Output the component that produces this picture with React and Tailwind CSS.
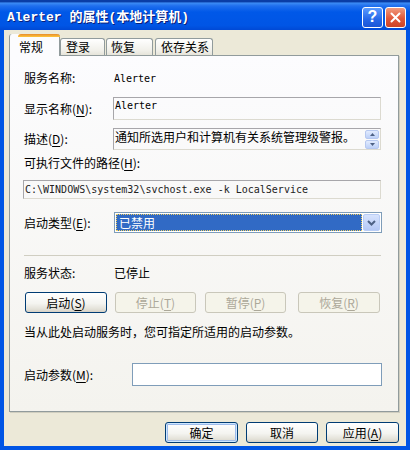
import React from "react";

function XpButton({ children, disabled, isDefault, className = "" }) {
  return (
    <div
      className={`flex items-center justify-center h-[21px] rounded-[3px] border text-[12px] leading-none ${
        disabled
          ? "border-[#C9C7BA] text-[#ACA899] bg-[#F5F4EA]"
          : "border-[#003C74] text-black bg-[linear-gradient(180deg,#FFFFFF_0%,#F4F4F0_55%,#E3E1D8_85%,#D6D0C5_100%)]"
      } ${isDefault ? "shadow-[inset_0_0_0_1px_#CEE7FF,inset_0_0_0_2px_#9DBBEB]" : ""} ${className}`}
    >
      {children}
    </div>
  );
}

function Mn({ children }) {
  return <span className="underline underline-offset-2">{children}</span>;
}

function Tab({ children, selected, className = "" }) {
  if (selected) {
    return (
      <div className={`relative z-10 -mb-px h-[22px] flex flex-col rounded-t-[3px] border-x border-[#919B9C] bg-[#FCFCFE] ${className}`}>
        <div className="h-[3px] -mx-px rounded-t-[3px] bg-[linear-gradient(180deg,#E68B2C,#FFC73C)]" />
        <div className="flex-1 flex items-center leading-none">{children}</div>
      </div>
    );
  }
  return (
    <div className={`h-[17px] flex items-center rounded-t-[3px] border border-b-0 border-[#919B9C] bg-[linear-gradient(180deg,#FFFFFF,#F1F0EA_70%,#E6E4DA)] leading-none ${className}`}>
      {children}
    </div>
  );
}

function Sunken({ className = "", children }) {
  return (
    <div className={`border border-t-[#A7A6AA] border-l-[#A7A6AA] border-r-[#DCDAD0] border-b-[#DCDAD0] ${className}`}>
      {children}
    </div>
  );
}

function Spin({ up }) {
  return (
    <div className="w-[14px] h-[9px] rounded-[2px] border border-[#B6C8F0] bg-[linear-gradient(180deg,#E2EBFE,#BCD0F8)] flex items-center justify-center">
      <svg width="5" height="3" viewBox="0 0 5 3">
        {up ? <polygon points="0,3 5,3 2.5,0" fill="#4D6185" /> : <polygon points="0,0 5,0 2.5,3" fill="#4D6185" />}
      </svg>
    </div>
  );
}

export default function App() {
  return (
    <div className="w-[410px] h-[450px] overflow-hidden flex flex-col font-['Noto_Sans_CJK_SC',sans-serif] text-[12px] text-black bg-[#0055E5]">
      {/* title bar */}
      <div className="h-[30px] shrink-0 flex flex-col bg-[linear-gradient(180deg,#0A3DA6_0%,#0A3DA6_6%,#3C8CF5_10%,#1F6EEE_20%,#0058E8_40%,#0055E5_85%,#0049D5_100%)]">
        <div className="flex-1 flex items-center pt-[4px] pl-[7px] pr-[4px]">
          <div className="flex-1 text-white font-bold text-[13px] leading-none font-['Liberation_Mono','Noto_Sans_CJK_SC',monospace] [text-shadow:1px_1px_0_#0A1E78]">
            Alerter 的属性(本地计算机)
          </div>
          <div className="w-[21px] h-[21px] rounded-[3px] border border-white bg-[linear-gradient(180deg,#5B9BFF,#2567E8_60%,#1A55D6)] flex items-center justify-center text-white font-bold text-[16px] leading-none font-['Liberation_Sans',sans-serif]">
            ?
          </div>
          <div className="ml-[2px] w-[21px] h-[21px] rounded-[3px] border border-white bg-[linear-gradient(180deg,#F09A7E,#E2583A_55%,#CC4428)] flex items-center justify-center">
            <svg width="11" height="11" viewBox="0 0 11 11">
              <path d="M1.5 1.5 L9.5 9.5 M9.5 1.5 L1.5 9.5" stroke="white" strokeWidth="2" strokeLinecap="round" />
            </svg>
          </div>
        </div>
      </div>

      {/* body */}
      <div className="flex-1 flex mx-[4px] bg-[#ECE9D8] flex-col pl-[5px] pr-[7px]">
        <div className="h-[25px] flex items-end">
          <Tab selected className="w-[51px] pl-[9px]">常规</Tab>
          <Tab className="w-[45px] pl-[5px]">登录</Tab>
          <Tab className="ml-px w-[47px] pl-[4px]">恢复</Tab>
          <Tab className="ml-[2px] w-[58px] pl-[5px]">依存关系</Tab>
        </div>

        <div className="h-[357px] border border-[#919B9C] shadow-[1px_1px_0_#D0CEBF] bg-[linear-gradient(180deg,#FCFCFE,#F4F3EE)] flex flex-col pl-[14px] pr-[17px]">
          <div className="mt-[12px] h-[20px] flex items-center">
            <div className="w-[90px]">服务名称:</div>
            <div className="font-['DejaVu_Sans_Mono',monospace] text-[10px]">Alerter</div>
          </div>

          <div className="mt-[9px] h-[23px] flex items-center">
            <div className="w-[89px]">显示名称(<Mn>N</Mn>):</div>
            <Sunken className="flex-1 h-[23px] pl-[1px] pt-[2px]">
              <div className="font-['DejaVu_Sans_Mono',monospace] text-[10px] leading-[12px]">Alerter</div>
            </Sunken>
          </div>

          <div className="mt-[8px] h-[22px] flex items-center">
            <div className="w-[89px]">描述(<Mn>D</Mn>):</div>
            <Sunken className="flex-1 h-[22px] flex pl-[1px]">
              <div className="flex-1 leading-[15px]">通知所选用户和计算机有关系统管理级警报。</div>
              <div className="flex flex-col gap-[1px] pt-[1px] pr-[1px]">
                <Spin up />
                <Spin />
              </div>
            </Sunken>
          </div>

          <div className="mt-[5px] h-[16px] flex items-center">可执行文件的路径(<Mn>H</Mn>):</div>

          <Sunken className="mt-[9px] -ml-px h-[19px] flex items-center pl-[1px]">
            <div className="font-['DejaVu_Sans_Mono',monospace] text-[10px] text-[#222]">C:\WINDOWS\system32\svchost.exe -k LocalService</div>
          </Sunken>

          <div className="mt-[13px] h-[21px] flex items-center">
            <div className="w-[90px]">启动类型(<Mn>E</Mn>):</div>
            <div className="flex-1 h-[21px] -mr-px border border-[#7F9DB9] bg-white flex items-center p-[1px]">
              <div className="flex-1 h-full bg-[#316AC5] border border-dotted border-[#F0D060] text-white flex items-center pl-[2px] leading-none">已禁用</div>
              <div className="ml-[1px] w-[17px] h-full rounded-[2px] border border-[#B9CDF6] bg-[linear-gradient(180deg,#D7E3FD,#B4C8F6)] flex items-center justify-center">
                <svg width="9" height="6" viewBox="0 0 9 6">
                  <path d="M1 1 L4.5 4.5 L8 1" stroke="#4D6185" strokeWidth="2" fill="none" />
                </svg>
              </div>
            </div>
          </div>

          <div className="mt-[22px] h-px bg-[#D0CEC2]" />

          <div className="mt-[9px] h-[16px] flex items-center">
            <div className="w-[90px]">服务状态:</div>
            <div>已停止</div>
          </div>

          <div className="mt-[11px] flex">
            <XpButton className="w-[82px] ml-px">启动(<Mn>S</Mn>)</XpButton>
            <XpButton disabled className="w-[81px] ml-[8px]">停止(<Mn>T</Mn>)</XpButton>
            <XpButton disabled className="w-[81px] ml-[9px]">暂停(<Mn>P</Mn>)</XpButton>
            <XpButton disabled className="w-[82px] ml-[12px]">恢复(<Mn>R</Mn>)</XpButton>
          </div>

          <div className="mt-[11px] h-[16px] flex items-center">当从此处启动服务时，您可指定所适用的启动参数。</div>

          <div className="mt-[23px] h-[23px] flex items-center">
            <div className="w-[108px]">启动参数(<Mn>M</Mn>):</div>
            <div className="flex-1 h-[23px] -mr-px border border-[#7F9DB9] bg-white" />
          </div>
        </div>

        <div className="mt-[10px] flex justify-end">
          <XpButton isDefault className="w-[73px]">确定</XpButton>
          <XpButton className="w-[72px] ml-[8px]">取消</XpButton>
          <XpButton className="w-[73px] ml-[8px]">应用(<Mn>A</Mn>)</XpButton>
        </div>
      </div>
      <div className="h-[4px] shrink-0" />
    </div>
  );
}
